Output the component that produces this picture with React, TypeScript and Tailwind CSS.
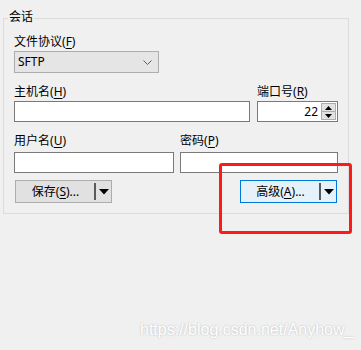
import React from "react";

function Mn({ pre, k }: { pre: string; k: string }) {
  return (
    <span className="whitespace-nowrap">
      {pre}(<span className="underline underline-offset-2">{k}</span>)
    </span>
  );
}

function Arrow() {
  return (
    <svg width="10" height="6" viewBox="0 0 10 6" className="block">
      <polygon points="0,0 10,0 5,5.5" fill="#000" />
    </svg>
  );
}

function SplitButton({
  label,
  k,
  focused,
}: {
  label: string;
  k: string;
  focused?: boolean;
}) {
  return (
    <div
      className={
        "flex h-[23px] w-[97px] items-center border " +
        (focused ? "border-[#0078d7] bg-[#e5f1fb]" : "border-[#adadad] bg-[#e1e1e1]")
      }
    >
      <div className="flex flex-1 items-center justify-center pl-[1px] text-[12px] leading-none text-black">
        <Mn pre={label} k={k} />
        <span>...</span>
      </div>
      <div className="h-[17px] w-[2px] bg-[#5a5a5a]" />
      <div className="flex w-[15px] justify-center pl-[1px]">
        <Arrow />
      </div>
    </div>
  );
}

export default function App() {
  return (
    <div
      className="relative h-[350px] w-[361px] overflow-hidden bg-[#f0f0f0] pl-[3px] pt-[18px] text-[12px] text-black"
      style={{ fontFamily: '"Noto Sans", "Noto Sans CJK SC", sans-serif' }}
    >
      <div className="relative h-[196px] w-[346px] border border-[#dcdcdc] pl-[10px] pt-[15px]">
        <div className="absolute left-[4px] top-[-10px] bg-[#f0f0f0] px-[1px] text-[12px] leading-[16px]">
          会话
        </div>

        <div className="leading-[16px]">
          <Mn pre="文件协议" k="F" />
        </div>
        <div className="mt-[1px] flex h-[22px] w-[145px] items-center justify-between border border-[#adadad] bg-[#e5e5e5] pl-[3px] pr-[6px]">
          <span className="text-[12px] leading-none">SFTP</span>
          <svg width="9" height="5" viewBox="0 0 9 5" className="block">
            <polyline points="0.5,0.5 4.5,4.5 8.5,0.5" fill="none" stroke="#606060" strokeWidth="1" />
          </svg>
        </div>

        <div className="mt-[11px] flex gap-[7px]">
          <div className="flex w-[236px] flex-col">
            <div className="leading-[16px]">
              <Mn pre="主机名" k="H" />
            </div>
            <div className="mt-[1px] h-[21px] w-[236px] border border-[#7a7a7a] bg-white" />
          </div>
          <div className="flex w-[81px] flex-col">
            <div className="leading-[16px]">
              <Mn pre="端口号" k="R" />
            </div>
            <div className="mt-[1px] flex h-[21px] w-[81px] items-center border border-[#7a7a7a] bg-white">
              <span className="flex-1 pr-[3px] text-right text-[12px] leading-none">22</span>
              <div className="mr-[1px] flex h-[17px] w-[15px] flex-col border border-[#adadad] bg-[#e1e1e1]">
                <div className="flex flex-1 items-center justify-center border-b border-[#adadad]">
                  <svg width="7" height="4" viewBox="0 0 7 4" className="block">
                    <polygon points="0,4 7,4 3.5,0" fill="#000" />
                  </svg>
                </div>
                <div className="flex flex-1 items-center justify-center">
                  <svg width="7" height="4" viewBox="0 0 7 4" className="block">
                    <polygon points="0,0 7,0 3.5,4" fill="#000" />
                  </svg>
                </div>
              </div>
            </div>
          </div>
        </div>

        <div className="mt-[11px] flex gap-[6px]">
          <div className="flex w-[160px] flex-col">
            <div className="leading-[16px]">
              <Mn pre="用户名" k="U" />
            </div>
            <div className="mt-[3px] h-[21px] w-[160px] border border-[#7a7a7a] bg-white" />
          </div>
          <div className="flex w-[158px] flex-col">
            <div className="leading-[16px]">
              <Mn pre="密码" k="P" />
            </div>
            <div className="mt-[3px] h-[21px] w-[158px] border border-[#7a7a7a] bg-white" />
          </div>
        </div>

        <div className="mt-[7px] flex w-[323px] justify-between pl-[1px]">
          <SplitButton label="保存" k="S" />
          <SplitButton label="高级" k="A" focused />
        </div>
      </div>

      <div className="pointer-events-none absolute left-[219px] top-[163px] h-[71px] w-[133px] rounded-[3px] border-[3px] border-[#ff1a1a]" />

      <div
        className="absolute left-[140px] top-[320px] text-[16px] leading-[20px] text-white [text-shadow:0_0_2px_rgba(0,0,0,0.25)]"
        style={{ fontFamily: '"Liberation Sans", Arial, sans-serif' }}
      >
        https://blog.csdn.net/Anyhow_
      </div>
    </div>
  );
}
